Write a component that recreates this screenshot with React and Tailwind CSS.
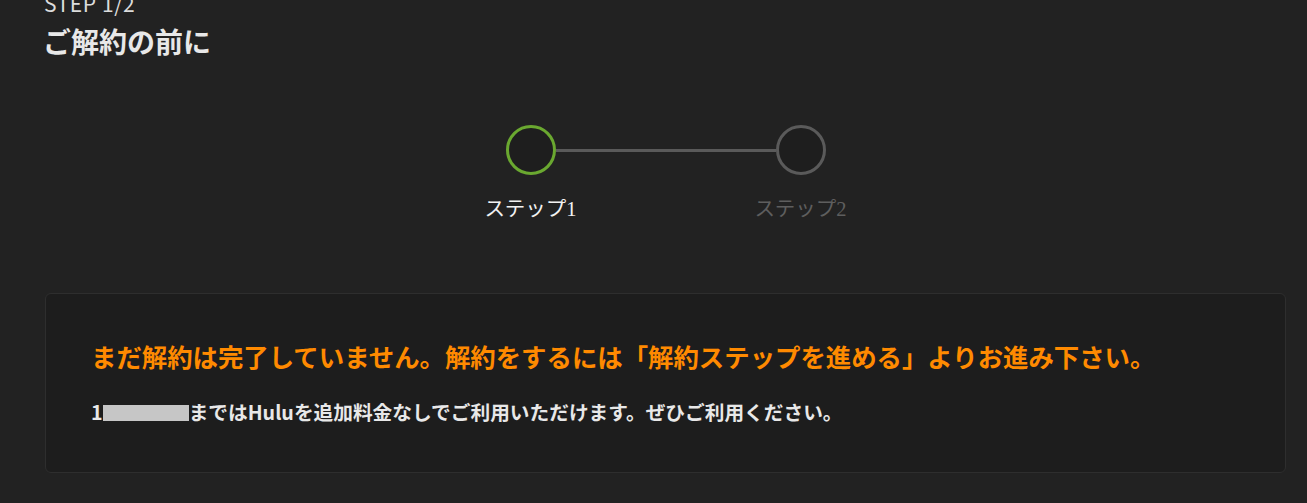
import React from 'react';

const jp = { fontFamily: '"Noto Sans CJK JP", "Noto Sans", sans-serif' };

function StepCircle({ active }) {
	return (
		<div
			className={`w-[50px] h-[50px] rounded-full border-[3px] bg-[#1e1e1e] shrink-0 ${
				active ? 'border-[#6aa830]' : 'border-[#5a5a5a]'
			}`}
		/>
	);
}

function StepLabel({ children, active }) {
	return (
		<div className="w-[50px] flex justify-center">
			<span
				className={`whitespace-nowrap text-[20.5px] leading-[28px] ${active ? 'text-[#f2f2f2]' : 'text-[#5e5e5e]'}`}
				style={{ fontFamily: '"Liberation Serif", "Noto Sans CJK JP", serif' }}
			>
				{children}
			</span>
		</div>
	);
}

export default function App() {
	return (
		<div className="min-h-screen bg-[#222222] overflow-hidden" style={jp}>
			<div className="pl-[45px] pr-[21px]">
				<div className="mt-[-10px] text-[21px] leading-[26px] tracking-[0.6px] text-[#dcdcdc] -ml-[1px]">STEP 1/2</div>
				<h1 className="mt-[7px] text-[28px] leading-[36px] font-bold text-[#e8e8e8] -ml-[2px]">ご解約の前に</h1>

				{/* step indicator */}
				<div className="mt-[66px] flex flex-col items-center">
					<div className="flex items-center">
						<StepCircle active />
						<div className="w-[220px] h-[3px] bg-[#5a5a5a]" />
						<StepCircle />
					</div>
					<div className="mt-[20px] flex gap-[220px]">
						<StepLabel active>ステップ1</StepLabel>
						<StepLabel>ステップ2</StepLabel>
					</div>
				</div>

				<div className="mt-[70px] h-[180px] rounded-md border border-[#2e2e2e] bg-[#1d1d1d] pl-[45px] pt-[45px]">
					<p className="text-[25.4px] leading-[34px] font-bold text-[#ff8a00] whitespace-nowrap">
						まだ解約は完了していません。解約をするには「解約ステップを進める」よりお進み下さい。
					</p>
					<p className="mt-[26px] text-[19.7px] leading-[26px] font-bold text-[#e8e8e8] whitespace-nowrap">
						1<span className="inline-block w-[86px] h-[16px] bg-[#c6c6c6] align-middle -mt-[3px]" />
						までは<span>Hulu</span>を追加料金なしでご利用いただけます。ぜひご利用ください。
					</p>
				</div>
			</div>
		</div>
	);
}
